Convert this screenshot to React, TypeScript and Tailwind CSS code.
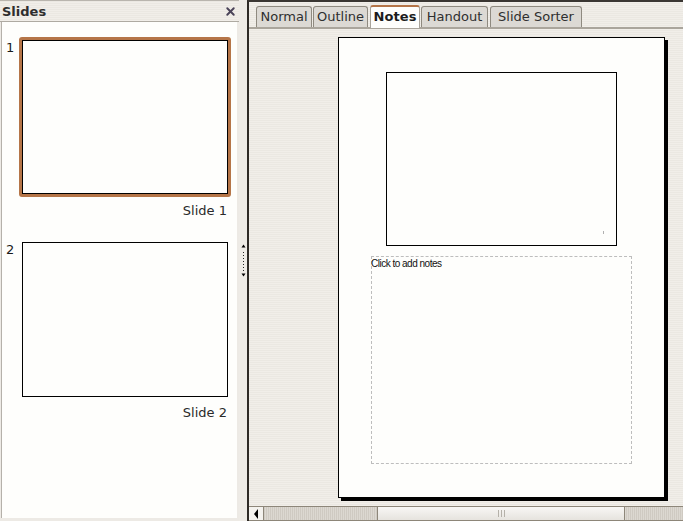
import { X } from "lucide-react"

const TABS = [
  { label: "Normal", width: "w-[56px]", gap: "mr-[1px]" },
  { label: "Outline", width: "w-[55px]", gap: "mr-[2px]" },
  { label: "Notes", width: "w-[50px]", gap: "mr-[1px]" },
  { label: "Handout", width: "w-[67px]", gap: "mr-[2px]" },
  { label: "Slide Sorter", width: "w-[92px]", gap: "mr-0" },
]
const stripes =
  "bg-[repeating-linear-gradient(0deg,#f1eee9_0px,#f1eee9_1px,#ebe8e2_1px,#ebe8e2_2px)]"

function SlideRow({ n, selected }: { n: number; selected?: boolean }) {
  return (
    <div className="flex flex-col">
      <div className="flex">
        <span className={"w-[17px] pl-[4px] text-[13px] leading-[15px] text-[#1a1a1a] " + (selected ? "mt-[3px]" : "mt-0")}>{n}</span>
        {selected ? (
          <div className="h-[160px] w-[212px] rounded-[3px] border-[3px] border-[#b57548] bg-[#fefefc]">
            <div className="h-full w-full border border-black bg-[#fefefc]" />
          </div>
        ) : (
          <div className="ml-[3px] h-[155px] w-[206px] border border-black bg-[#fefefc]" />
        )}
      </div>
      <div className={"pr-[10px] text-right text-[13px] leading-[16px] text-[#2a2a2a] " + (selected ? "mt-[6px]" : "mt-[8px]")}>Slide {n}</div>
    </div>
  )
}

export default function App() {
  return (
    <div className="flex h-[521px] w-[683px] overflow-hidden bg-[#edeae5] font-['DejaVu_Sans',sans-serif]">
      {/* slide panel */}
      <div className="flex w-[239px] shrink-0 flex-col pb-[3px]">
        <div className={"flex h-[22px] shrink-0 items-center justify-between border-b border-t border-b-[#aeaaa2] border-t-[#b9b5ae] pl-[2px] pr-[2px] " + stripes}>
          <span className="text-[13px] font-bold leading-none text-[#2e2e2e]">Slides</span>
          <X size={13} strokeWidth={3.5} className="text-[#4a4358]" />
        </div>
        <div className="ml-[1px] mr-[2px] flex flex-1 flex-col gap-[23px] border-l border-l-[#b5b1aa] bg-[#fefefc] pt-[15px]">
          <SlideRow n={1} selected />
          <SlideRow n={2} />
        </div>
      </div>

      {/* sash */}
      <div className="flex w-[8px] shrink-0 items-center bg-[#eeebe6]">
        <div className="flex h-[33px] flex-col items-center justify-between pl-[3px]">
          <div className="h-0 w-0 rotate-90 border-y-[2px] border-r-[3px] border-y-transparent border-r-black" />
          <div className="h-[20px] w-px bg-[repeating-linear-gradient(0deg,#222_0px,#222_1px,transparent_1px,transparent_3px)]" />
          <div className="h-0 w-0 rotate-90 border-y-[2px] border-l-[3px] border-y-transparent border-l-black" />
        </div>
      </div>

      {/* main view */}
      <div className="flex min-w-0 flex-1 flex-col border-l-2 border-t-2 border-l-[#2e2a26] border-t-[#3a3632]">
        <div className={"flex h-[27px] shrink-0 items-end border-b-2 border-b-[#aaa59c] pl-[7px] " + stripes}>
          {TABS.map((tab) =>
            tab.label === "Notes" ? (
              <div
                key={tab.label}
                className={"mb-[-1px] flex h-[23px] items-center justify-center rounded-t-[3px] border-x border-t-2 border-x-[#a9a49b] border-t-[#b57548] bg-[#fefefc] pb-[2px] text-[13px] font-bold tracking-[0.1px] text-[#1c1c1c] " + tab.width + " " + tab.gap}
              >
                {tab.label}
              </div>
            ) : (
              <div
                key={tab.label}
                className={"flex h-[21px] items-center justify-center rounded-t-[3px] border-x border-t border-[#8f8a80] bg-[#dcd9d4] text-[13px] text-[#2f2f2f] " + tab.width + " " + tab.gap}
              >
                {tab.label}
              </div>
            ),
          )}
        </div>

        <div className={"flex min-h-0 flex-1 justify-start pl-[89px] pt-[8px] " + stripes}>
          <div className="flex h-[461px] w-[327px] flex-col items-start border border-black bg-[#fefefc] shadow-[3px_3px_0_#000]">
            <div className="relative ml-[47px] mt-[34px] h-[174px] w-[231px] border border-black bg-[#fefefc]">
              <span className="absolute bottom-[11px] right-[12px] h-[3px] w-px bg-[#b0b0b0]" />
            </div>
            <div className="ml-[32px] mt-[10px] h-[208px] w-[261px] border border-dashed border-[#bdbdbd] bg-[#fefefc]">
              <span className="ml-[-1px] mt-px block font-['Liberation_Sans',sans-serif] text-[10px] leading-[12px] tracking-[-0.5px] text-[#111]">Click to add notes</span>
            </div>
          </div>
        </div>

        {/* scrollbar */}
        <div className="flex h-[15px] shrink-0 border-y border-y-[#8d8679] bg-[repeating-linear-gradient(90deg,#dcd8d1_0px,#dcd8d1_1px,#cfcac2_1px,#cfcac2_2px)]">
          <div className="flex h-full w-[15px] items-center justify-center border-r border-r-[#8d8679] bg-[#f4f2ee]">
            <div className="h-0 w-0 border-y-[5px] border-r-[4px] border-y-transparent border-r-black" />
          </div>
          <div className="ml-[113px] flex h-full w-[248px] items-center justify-center gap-[2px] border-x border-x-[#8d8679] bg-gradient-to-b from-[#f8f7f5] to-[#e6e3de]">
            <span className="h-[7px] w-px bg-[#b5b1a9]" />
            <span className="h-[7px] w-px bg-[#b5b1a9]" />
            <span className="h-[7px] w-px bg-[#b5b1a9]" />
          </div>
        </div>
      </div>
    </div>
  )
}
